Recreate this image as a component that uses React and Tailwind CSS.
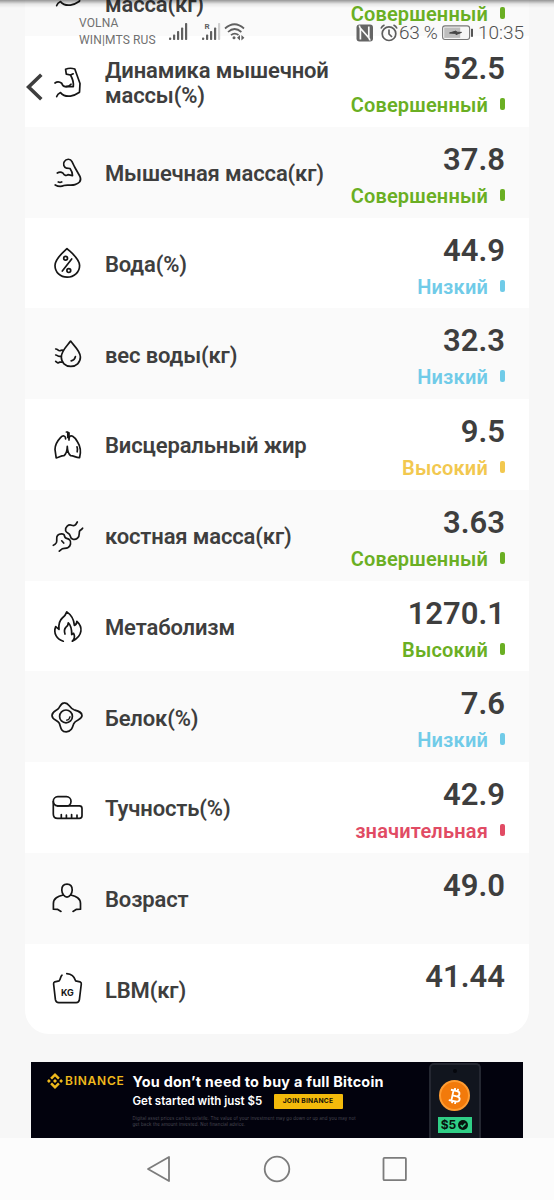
const Icon = ({ children }) => (
  <svg
    viewBox="0 0 32 32"
    className="size-8 shrink-0 overflow-visible"
    fill="none"
    stroke="#161616"
    strokeWidth="1.7"
    strokeLinecap="round"
    strokeLinejoin="round"
  >
    {children}
  </svg>
)

const icons = {
  flex: (
    <Icon>
      <path d="M4 17C6 15.6 9 16 10.7 17.3C11.8 20.5 13 21 15 20.6L22.3 20.6C22.8 16 21.5 12.5 19.5 9L15.3 8.2L14.6 3.3Q19 1.4 23.8 3L29 17.5L28.5 26.3C24 29.5 15 33 9.5 26.6Q6.5 28 5.7 30.6" />
      <path d="M19.5 9L22.2 7.8M15 20.6Q18.5 20.3 20 18.2" />
    </Icon>
  ),
  muscle: (
    <Icon>
      <path d="M6.3 16C8.3 14.8 10.5 15 12 16.2C13.3 18.8 15.5 19 17 17.6L21.5 18.6C21.5 15.5 20.5 13.5 19 11.5L15.5 11.2C12.8 10.5 11.8 7 13.3 4.6C15.2 1.5 19.5 1.4 21 4.6L23.6 10L29 19.5C31 24.5 27.5 26.5 24 27.6C20 29 16 27.2 13 28.6C9.5 30.2 7 29.6 4.2 28" />
      <path d="M7.3 25Q9 25.6 10.7 25" />
    </Icon>
  ),
  water: (
    <Icon>
      <path d="M16 1.6C12 5.5 4 11.5 4 18.5C4 25.3 9.4 30.2 16.2 30.2C23 30.2 28.6 25.3 28.6 18.5C28.6 11.5 20 5.5 16 1.6Z" />
      <path d="M20.7 12L11.3 24" />
      <circle cx="14.6" cy="11.3" r="1.9" />
      <circle cx="17.8" cy="23.6" r="1.9" />
    </Icon>
  ),
  waterWeight: (
    <Icon>
      <path d="M19.6 3.1C16.8 7.2 10.3 12.8 10.3 19C10.3 24.6 14.3 28.4 19.8 28.4C25.3 28.4 29.4 24.6 29.4 19C29.4 12.8 22.4 7.2 19.6 3.1Z" />
      <path d="M24.4 18.6Q23.8 22 20.2 22.8" />
      <path d="M4.7 11C6.8 10.8 7 13.2 9 12.7Q10.5 12 12 12.3M4.7 17C6.6 16.8 6.6 19.2 10.3 18.2M4.7 23.4Q7 25.8 8.5 24.2L11 24.2" />
    </Icon>
  ),
  lungs: (
    <Icon>
      <path d="M14.6 9.8C14.6 6.4 11.8 6.1 9.5 8.6C6 12.3 4 17 4 20.5L5.2 28.8C7.5 29 10 26.4 13 26.6Q16.2 23.8 16.3 17.4Q16.4 23.8 19.6 26.6C22.5 26.4 25.5 29 28.6 28.6Q31 20 26.6 13C23.6 7.7 19.3 4.5 18 9.2V11" />
      <path d="M15.4 3H16.8V8.4M18 9V3.8M26 17.8Q27 20.6 26.2 22.8" />
    </Icon>
  ),
  bone: (
    <Icon>
      <path d="M26.3 2C24.5 5.5 23.4 6.2 20.6 5.2C17.4 4 14 7 14.6 10.6C15.2 13.4 18.6 12.6 19.2 15.8C19.8 19.4 23.5 20.4 26.4 18.3C29.6 16 27.2 12.6 29 10.4Q30.6 9.6 31.6 8.2" />
      <path d="M2.3 25.3Q4 24.8 5.4 22.6C6.6 20 4.6 17.8 6.6 15.4C8.4 13.3 13.2 13.2 13.4 15.6C13.8 19.4 16.8 18 18.6 19.8C20.6 22 19.6 26.2 17 27.6C14 28.8 11.4 27.8 10.2 29.6L8.3 31.2" />
      <path d="M10.7 20.8L12.7 23" />
    </Icon>
  ),
  flame: (
    <Icon>
      <path d="M12.3 31.2C5.8 29.4 2 23 4.7 16.6L8 19.4Q7.2 11.6 11.3 8Q14.6 5.4 15.8 1.9Q22.8 6.6 23.4 15.5Q25.8 14.5 25.9 11.4C31.6 16.5 32.4 25.6 21.3 31.2Q25 27.5 22.5 23.3L20.7 24.6C20.8 19.2 20.2 15.5 17.3 12.8Q17.4 15.4 14.8 17.4Q12.6 20 14 24" />
    </Icon>
  ),
  egg: (
    <Icon>
      <path d="M13.3 1.8C18.4 1.6 17.7 7 23 8.8C27.5 10.2 31 11 31 14.6C31 19.2 24.5 18.4 22.8 22.6C21.6 26.3 20.4 30.8 15.2 30.8C9.8 30.8 9.8 26.2 8.4 22.4C6.8 19 1 18.8 1 14.4C1 10 6.3 9.8 8 6.8C9.4 4.4 10.4 1.8 13.3 1.8Z" />
      <circle cx="15" cy="15.4" r="6.4" />
      <path d="M19 15.6Q18.6 18.6 15.6 19.2" strokeWidth="1.3" />
    </Icon>
  ),
  tape: (
    <Icon>
      <rect x="2.3" y="4.7" width="17.7" height="9.2" rx="4.5" />
      <path d="M2.3 9.5V22Q2.3 26.4 6.7 26.4H28.4Q31 26.4 31 23.8V16.5Q31 13.9 28.4 13.9H6.7M10.3 26V22.6M15.4 26V23.2M20.6 26V22.6M26 26V23.2" />
    </Icon>
  ),
  person: (
    <Icon>
      <path d="M16 1.2C12.8 1.2 10.8 3.6 10.8 7C10.8 11 13.6 14.2 16 14.2S21.2 11 21.2 7C21.2 3.6 19.2 1.2 16 1.2Z" />
      <path d="M12.2 12C7 13.3 2.4 15 2.4 20.6V26.2L6.4 26.3L10 28.4M19.8 12C25 13.3 29.5 15 29.5 20.6V26.2L25.5 26.3L22 28.4" />
    </Icon>
  ),
  lbm: (
    <Icon>
      <path d="M11 2.2C9.2 3.6 9.8 6 8.2 7.8L3.8 8.8Q2.4 9.4 2.6 11L4.4 26.7Q4.9 29.6 7.8 29.6H25.2Q28 29.6 28.4 26.7L30.3 11Q30.5 9.4 29 8.8L24.6 7.8Q22.6 1 15.8.6" />
      <text x="16.4" y="23" textAnchor="middle" fill="#161616" stroke="none" className="font-['Inter'] text-[9px] font-bold">KG</text>
    </Icon>
  ),
}

const rows = [
  { icon: 'muscle', label: 'Мышечная масса(кг)', value: '37.8', status: 'Совершенный', tone: 'green' },
  { icon: 'water', label: 'Вода(%)', value: '44.9', status: 'Низкий', tone: 'blue' },
  { icon: 'waterWeight', label: 'вес воды(кг)', value: '32.3', status: 'Низкий', tone: 'blue' },
  { icon: 'lungs', label: 'Висцеральный жир', value: '9.5', status: 'Высокий', tone: 'yellow' },
  { icon: 'bone', label: 'костная масса(кг)', value: '3.63', status: 'Совершенный', tone: 'green' },
  { icon: 'flame', label: 'Метаболизм', value: '1270.1', status: 'Высокий', tone: 'green' },
  { icon: 'egg', label: 'Белок(%)', value: '7.6', status: 'Низкий', tone: 'blue' },
  { icon: 'tape', label: 'Тучность(%)', value: '42.9', status: 'значительная', tone: 'red' },
  { icon: 'person', label: 'Возраст', value: '49.0' },
  { icon: 'lbm', label: 'LBM(кг)', value: '41.44' },
]

const tones = {
  green: 'text-[#6aaf23]',
  blue: 'text-[#70cbe8]',
  yellow: 'text-[#f2c84f]',
  red: 'text-[#e14b64]',
}

const Row = ({ icon, label, value, status, tone }) => (
  <div className="flex h-[90.75px] odd:bg-[#fafafa] even:bg-white pl-[26px] pr-6">
    <div className="flex flex-1 items-center gap-[22px] pt-px">
      {icons[icon]}
      <div className="pt-0.5 text-[22px] leading-[25px] font-semibold tracking-[-0.14px] whitespace-pre-line">{label}</div>
    </div>
    <div className="flex flex-col items-end pt-[15px]">
      <div className="text-[31px] leading-9 font-semibold">{value}</div>
      {status && (
        <div className={`mt-[6px] flex h-6 items-center gap-3 text-[20px] font-semibold tracking-[0.18px] ${tones[tone]}`}>
          <span>{status}</span>
          <span className="mb-0.5 h-3 w-[5px] rounded-[2px] bg-current" />
        </div>
      )}
    </div>
  </div>
)

const Signal = ({ weak }) => (
  <svg viewBox="0 0 19 18" className="h-[18px] w-[19px]" fill="#606060">
    <rect x="0" y="14.5" width="2.2" height="2.5" rx=".8" />
    <rect x="4" y="11.5" width="2.2" height="5.5" rx=".8" />
    <rect x="8" y="8" width="2.2" height="9" rx=".8" />
    <rect x="12" y="4.5" width="2.2" height="12.5" rx=".8" />
    <rect x="16" y="0" width="2.2" height="17" rx=".8" fill={weak ? '#cfcfcf' : '#606060'} />
    {weak && <text x="2.4" y="6.4" className="text-[8px] font-bold">R</text>}
  </svg>
)

const StatusBar = () => (
  <div className="absolute inset-x-0 top-0 flex h-12 justify-between pl-[79px] pr-[30px] text-[#707070]">
    <div className="flex">
      <div className="w-[90px] pt-[15px] text-[12px] leading-[17px] tracking-[0.15px] whitespace-nowrap">
        VOLNA
        <br />
        WIN|MTS RUS
      </div>
      <div className="flex items-start pt-[23px]">
        <Signal />
        <div className="ml-3.5"><Signal weak /></div>
        <svg viewBox="0 0 22 18" className="ml-[3px] h-[18px] w-[22px]" fill="none" stroke="#606060" strokeWidth="1.7">
          <path d="M1 5.5Q10.5-3 20 5.5M4 9Q10.5 3 17.4 9M7 12.2Q10.5 9 14.5 12" />
          <circle cx="10" cy="14.8" r="1.5" fill="#606060" stroke="none" />
          <path d="M16 12L13 14.7L16 17.4ZM17.4 12L20.4 14.7L17.4 17.4Z" fill="#606060" stroke="none" />
        </svg>
      </div>
    </div>
    <div className="flex h-[66px] items-center text-[19px] font-light text-[#505050]">
      <svg viewBox="0 0 18 18" className="h-[18px] w-[18px]">
        <rect x=".5" y=".5" width="16.5" height="17" rx="3" fill="#646464" />
        <path d="M4.4 15.5V4.2L12.8 13.8V2.5M4.4 4.2Q3.2 2.8 3.6 1.5M12.8 13.8Q14 15 13.7 16.5" fill="none" stroke="#f8f8f8" strokeWidth="1.7" />
      </svg>
      <svg viewBox="0 0 18 18" className="ml-1.5 h-[18px] w-[18px]" fill="none" stroke="#5c5c5c" strokeWidth="1.7">
        <circle cx="9" cy="9.7" r="6.8" />
        <path d="M9 5.5V10L12 13M1 4.5Q2 2 4.5 1M17 4.5Q16 2 13.5 1" />
      </svg>
      <span className="ml-px w-[43px] tracking-[-0.3px] whitespace-nowrap">63 %</span>
      <svg viewBox="0 0 32 16" className="h-4 w-8">
        <rect x=".6" y=".9" width="27" height="13.6" rx="2.4" fill="#f6f6f6" stroke="#777" strokeWidth="1.1" />
        <rect x="2.2" y="2.5" width="16" height="10.4" fill="#bdbdbd" />
        <path d="M7.5 8L14 6L14.6 7.2L19.5 7.4L14 9.6L13.5 8.4Z" fill="#444" stroke="#444" />
        <rect x="29" y="3.8" width="2" height="8" fill="#555" />
      </svg>
      <span className="ml-[4px] w-[46px] text-right whitespace-nowrap">10:35</span>
    </div>
  </div>
)

const Ad = () => (
  <div className="mx-[31px] mt-[27.75px] flex h-[76px] overflow-hidden bg-[#02020d] font-['Inter'] text-white">
    <div className="flex w-[101.5px] items-start pt-[11px] pl-4 text-[#efb91c]">
      <svg viewBox="0 0 16 16" className="size-4" fill="currentColor">
        <path d="M8 0L12.8 4.8L11 6.6L8 3.6L5 6.6L3.2 4.8ZM8 16L3.2 11.2L5 9.4L8 12.4L11 9.4L12.8 11.2ZM0 8L1.9 6.1L3.8 8L1.9 9.9ZM12.2 8L14.1 6.1L16 8L14.1 9.9ZM8 6L10 8L8 10L6 8Z" />
      </svg>
      <span className="ml-[2px] text-[12px] leading-4 font-semibold tracking-[0.75px]">BINANCE</span>
    </div>
    <div className="w-[296px] pt-[10px] whitespace-nowrap">
      <div className="text-[14.4px] leading-[20px] font-bold tracking-[0.25px]">You don’t need to buy a full Bitcoin</div>
      <div className="mt-px flex items-center">
        <span className="w-[141px] text-[11.5px] leading-4 font-semibold">Get started with just $5</span>
        <span className="flex h-[15px] w-[69px] items-center justify-center rounded-[1px] bg-[#f3ba0b] text-[6.7px] font-bold tracking-[0.2px] text-[#171208]">JOIN BINANCE</span>
      </div>
      <div className="mt-[7px] text-[4.4px] leading-[5.5px] tracking-[0.13px] text-[#4b4b55]">
        Digital asset prices can be volatile. The value of your investment may go down or up and you may not
        <br />
        get back the amount invested. Not financial advice.
      </div>
    </div>
    <div className="mt-px flex w-[52px] flex-col items-center rounded-t-[5px] border-2 border-b-0 border-[#242731] bg-[#11151e] pt-[4px]">
      <span className="size-1 shrink-0 rounded-full bg-[#05070c]" />
      <span className="mt-[7px] flex size-[31px] shrink-0 items-center justify-center rounded-full border-2 border-[#ff9c31] bg-[#f27a0b]">
        <svg viewBox="0 0 16 18" className="h-[16px] w-[14px] rotate-[12deg]" fill="none" stroke="white" strokeWidth="2.1">
          <path d="M2 3H9Q12.5 3 12.5 6Q12.5 9 9 9H5H10Q14 9 14 12Q14 15 10 15H2M5 3V15M6.3 0V3M9.8 0V3M6.3 15V18M9.8 15V18" />
        </svg>
      </span>
      <span className="mt-1.5 flex h-4 w-[34px] shrink-0 items-center justify-center gap-[2px] bg-[#30cf86] text-[12px] font-bold text-[#07140e]">
        $5
        <svg viewBox="0 0 10 10" className="size-2.5">
          <circle cx="5" cy="5" r="5" fill="#07140e" />
          <path d="M2.6 5.1L4.3 6.8L7.5 3.5" fill="none" stroke="#30cf86" strokeWidth="1.4" />
        </svg>
      </span>
    </div>
  </div>
)

export default function App() {
  return (
    <div className="relative flex h-[1200px] w-[554px] flex-col overflow-hidden bg-[#f7f7f7] font-['Roboto','Liberation_Sans',sans-serif] text-[#3e3e3e]">
      <div className="h-[1138px] overflow-hidden">
        <div className="mx-[25px] -mt-[54.75px] overflow-hidden rounded-b-[24px]">
          <Row icon="flex" label={'Скелетная\nмасса(кг)'} value="27.9" status="Совершенный" tone="green" />
          <Row icon="flex" label={'Динамика мышечной\nмассы(%)'} value="52.5" status="Совершенный" tone="green" />
          {rows.map((row) => (
            <Row key={row.label} {...row} />
          ))}
        </div>
        <Ad />
      </div>

      {/* Android navigation */}
      <div className="flex h-[62px] items-center justify-center gap-[89.5px] bg-[#fcfcfc]">
        <svg viewBox="0 0 28 28" className="size-7" fill="none" stroke="#7c7c7c" strokeWidth="1.8" strokeLinejoin="round">
          <path d="M23 2V26L2 14Z" />
        </svg>
        <svg viewBox="0 0 28 28" className="size-7" fill="none" stroke="#7c7c7c" strokeWidth="1.8">
          <circle cx="14" cy="14" r="12.3" />
        </svg>
        <svg viewBox="0 0 28 28" className="size-7" fill="none" stroke="#7c7c7c" strokeWidth="1.8">
          <rect x="2.5" y="2.8" width="22.4" height="22.4" rx="1" />
        </svg>
      </div>

      <div className="absolute inset-x-0 top-0 h-2 bg-linear-to-b from-black/40 via-black/8 to-transparent" />
      <StatusBar />
      <svg viewBox="0 0 18 28" className="absolute top-[73px] left-[26px] h-7 w-[18px]" fill="none" stroke="#3e3e3e" strokeWidth="3.6">
        <path d="M15.3 1.8L2.6 14L15.3 26.2" />
      </svg>
    </div>
  )
}
